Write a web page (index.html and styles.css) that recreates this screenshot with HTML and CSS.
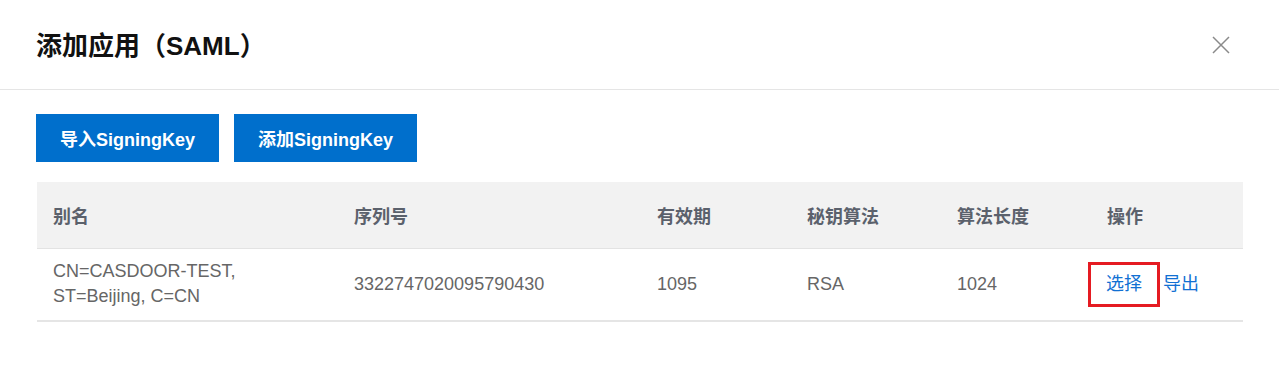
FILE: index.html
```html
<!DOCTYPE html>
<html lang="zh-CN">
<head>
<meta charset="utf-8">
<title>添加应用（SAML）</title>
<link rel="stylesheet" href="styles.css">
</head>
<body>
<div class="dialog">
  <div class="dialog-header">
    <h1 class="dialog-title">添加应用（SAML）</h1>
    <button class="close-btn" aria-label="关闭">
      <svg width="18" height="18" viewBox="0 0 18 18"><path d="M1 1L17 17M17 1L1 17" stroke="#8a8a8a" stroke-width="1.5" fill="none"/></svg>
    </button>
  </div>
  <div class="dialog-body">
    <div class="toolbar">
      <button class="btn-primary">导入SigningKey</button>
      <button class="btn-primary">添加SigningKey</button>
    </div>
    <table class="key-table">
      <colgroup>
        <col class="c1"><col class="c2"><col class="c3"><col class="c4"><col class="c5"><col>
      </colgroup>
      <thead>
        <tr>
          <th>别名</th>
          <th>序列号</th>
          <th>有效期</th>
          <th>秘钥算法</th>
          <th>算法长度</th>
          <th>操作</th>
        </tr>
      </thead>
      <tbody>
        <tr>
          <td>CN=CASDOOR-TEST,<br>ST=Beijing, C=CN</td>
          <td>3322747020095790430</td>
          <td>1095</td>
          <td>RSA</td>
          <td>1024</td>
          <td><a class="link link-boxed">选择</a><a class="link link-plain">导出</a></td>
        </tr>
      </tbody>
    </table>
  </div>
</div>
</body>
</html>
```

FILE: styles.css
```css
* { box-sizing: border-box; }
html, body {
  margin: 0;
  background: #fff;
  font-family: "Liberation Sans", "Noto Sans CJK SC", Arial, sans-serif;
}
.dialog { width: 1279px; height: 369px; }
.dialog-header {
  height: 90px;
  border-bottom: 1px solid #e5e5e5;
  display: flex;
  align-items: center;
  justify-content: space-between;
  padding: 0 49px 0 36px;
}
.dialog-title {
  margin: 0;
  font-size: 26px;
  font-weight: bold;
  color: #111;
  padding-bottom: 2px;
}
.close-btn {
  border: 0;
  background: none;
  padding: 0;
  width: 18px;
  height: 18px;
  display: flex;
  cursor: pointer;
}
.dialog-body { padding: 24px 36px 0 36px; }
.toolbar { display: flex; gap: 15px; }
.btn-primary {
  height: 48px;
  width: 183px;
  border: 0;
  background: #006fcc;
  color: #fff;
  font-family: "Liberation Sans", "Noto Sans CJK SC", Arial, sans-serif;
  font-size: 18px;
  font-weight: bold;
  padding: 0;
}
.key-table {
  margin-top: 20px;
  margin-left: 1px;
  width: 1206px;
  border-collapse: collapse;
  table-layout: fixed;
  font-size: 18px;
}
.c1 { width: 301px; }
.c2 { width: 303px; }
.c3, .c4, .c5 { width: 150px; }
.key-table th {
  height: 66px;
  background: #f2f2f2;
  text-align: left;
  font-weight: bold;
  color: #5b616c;
  padding: 0 16px;
  border-bottom: 1px solid #e3e3e3;
}
.key-table td {
  height: 73px;
  color: #666;
  padding: 0 16px;
  line-height: 25px;
  border-bottom: 2px solid #e5e5e5;
}
.link { color: #1170d3; cursor: pointer; }
.link-boxed {
  display: inline-block;
  border: 3px solid #e51b22;
  padding: 0 15px;
  line-height: 39px;
  margin-left: -19px;
}
.link-plain { margin-left: 3px; }
```
